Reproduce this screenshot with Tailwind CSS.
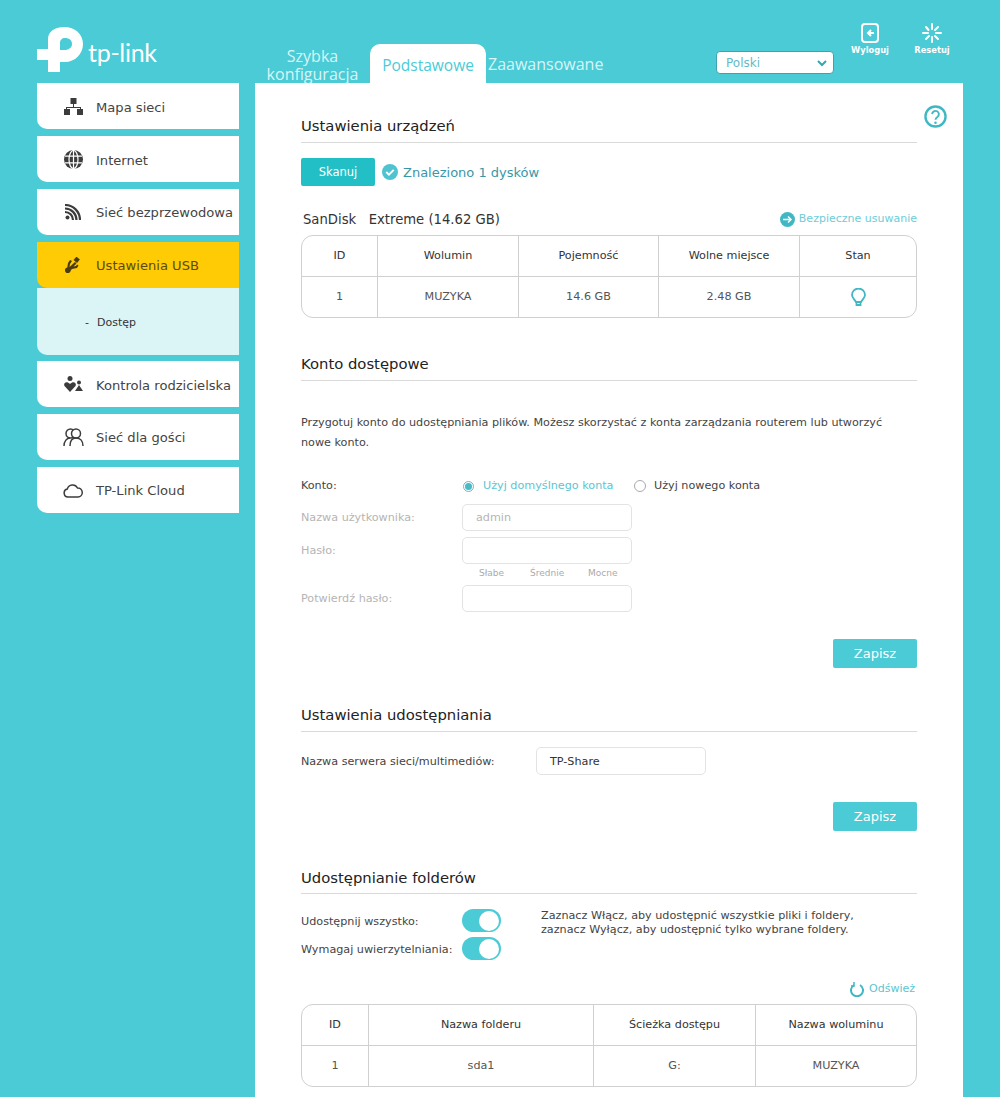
<!DOCTYPE html>
<html lang="pl">
<head>
<meta charset="utf-8">
<script src="https://cdn.jsdelivr.net/npm/@tailwindcss/browser@4"></script>
</head>
<body class="m-0">
<div class="w-[1000px] h-[1097px] overflow-hidden bg-[#4acbd6] font-['DejaVu_Sans',sans-serif] text-[#333]">
  <!-- header -->
  <header class="h-[83px] flex items-end relative">
    <div class="w-[255px] h-full pl-[37px] pt-[27px] flex items-start shrink-0">
      <svg width="46" height="46" viewBox="0 0 46 46" class="shrink-0"><path fill="#fff" d="M0 22h11V12C11 5 17 0 27 0c11 0 19 7 19 17S38 35 28 35h-5V23h4c4 0 8-2 8-6s-3-6-7-6c-3 0-5 2-5 5v29H11V33H0z"/></svg>
      <span class="ml-[5px] mt-[11px] text-[25px] leading-[28px] font-['Lato',sans-serif] text-white tracking-[-0.3px]">tp-link</span>
    </div>
    <nav class="flex items-end h-full font-['Open_Sans',sans-serif] text-[16px] leading-[18px]">
      <a class="w-[115px] text-center text-[#d9f5f7]">Szybka<br>konfiguracja</a>
      <a class="w-[116px] h-[39px] pt-[2px] bg-white rounded-t-[10px] flex items-center justify-center text-[15.5px] text-[#4acbd6]">Podstawowe</a>
      <a class="pl-[2px] pb-[10px] text-[#d9f5f7]">Zaawansowane</a>
    </nav>
    <div class="absolute left-[716px] top-[51px] w-[118px] h-[23px] pt-[1px] bg-white rounded-[4px] border border-[#3aa5ae] flex items-center justify-between pl-[9px] pr-[5px] text-[12px] text-[#62bcc6]">
      Polski
      <svg width="12" height="12" viewBox="0 0 12 12"><path d="M2 4l4 4 4-4" fill="none" stroke="#3aa5ae" stroke-width="2"/></svg>
    </div>
    <div class="absolute left-[845px] top-[23px] w-[50px] flex flex-col items-center text-white text-[8.3px] font-bold leading-[11px]">
      <svg width="18" height="20" viewBox="0 0 18 20"><rect x="1" y="1" width="16" height="18" rx="3" fill="none" stroke="#fff" stroke-width="2"/><path d="M13 10H7m3-3l-3 3 3 3" fill="none" stroke="#fff" stroke-width="2"/></svg>
      <span class="mt-[2px]">Wyloguj</span>
    </div>
    <div class="absolute left-[907px] top-[23px] w-[50px] flex flex-col items-center text-white text-[8.3px] font-bold leading-[11px]">
      <svg width="20" height="20" viewBox="0 0 20 20" stroke="#fff" stroke-width="2" stroke-linecap="round"><path d="M10 1v5M10 14v5M1 10h5M14 10h5M4 4l2.500 3M16 4l-3 3M4 16l3-3M16 16l-3-3"/></svg>
      <span class="mt-[2px]">Resetuj</span>
    </div>
  </header>

  <div class="flex items-start">
    <!-- sidebar -->
    <aside class="w-[202px] ml-[37px] mr-[16px] flex flex-col text-[13.1px] text-[#444] shrink-0">
      <a class="h-[46px] pt-[3px] bg-white rounded-bl-[10px] flex items-center mb-[7px]">
        <span class="w-[59px] pl-[13px] mb-[3px] flex justify-center"><svg width="19" height="17" viewBox="0 0 19 17" fill="#3c3c3c"><rect x="6.500" y="0" width="6" height="6"/><rect x="0" y="11" width="6" height="6"/><rect x="13" y="11" width="6" height="6"/><path d="M9 6h1v3h7v3h-1v-2H3v2H2V9h7z"/></svg></span>Mapa sieci
      </a>
      <a class="h-[46px] pt-[3px] bg-white rounded-bl-[10px] flex items-center mb-[7px]">
        <span class="w-[59px] pl-[13px] mb-[3px] flex justify-center"><svg width="19" height="19" viewBox="0 0 19 19"><circle cx="9.500" cy="9.500" r="9.500" fill="#3c3c3c"/><g fill="none" stroke="#fff" stroke-width="1.200"><ellipse cx="9.500" cy="9.500" rx="4.500" ry="9"/><path d="M9.500 0v19M1 6.200h17M1 12.800h17"/></g></svg></span>Internet
      </a>
      <a class="h-[46px] pt-[2px] bg-white rounded-bl-[10px] flex items-center mb-[7px]">
        <span class="w-[59px] pl-[13px] mb-[2px] flex justify-center"><svg width="16" height="16" viewBox="0 0 16 16" fill="none" stroke="#3c3c3c" stroke-width="2.200"><circle cx="2.500" cy="13.500" r="2" fill="#3c3c3c" stroke="none"/><path d="M0 8a8 8 0 0 1 8 8M0 4.500a11.500 11.500 0 0 1 11.500 11.500M0 1a15 15 0 0 1 15 15"/></svg></span><span class="whitespace-nowrap">Sieć bezprzewodowa</span>
      </a>
      <a class="h-[46px] pt-[2px] bg-[#ffcb05] rounded-bl-[10px] flex items-center text-[#5c4a10]">
        <span class="w-[59px] pl-[13px] mb-[2px] flex justify-center"><svg width="16" height="16" viewBox="0 0 16 16" fill="#4a3c10"><circle cx="2.800" cy="13.200" r="2.800"/><path d="M2 12L3 6l2-3 2 1-2 3-.5 3L10 5l1.500 1.500-3 3 2.500-.5 1-1.500 1.500 1-1.500 2.500-5 1-3 3z"/><rect x="9.500" y="0.500" width="4.500" height="4.500" transform="rotate(40 11.700 2.700)"/></svg></span>Ustawienia USB
      </a>
      <div class="h-[67px] pt-[3px] bg-[#dbf5f7] rounded-bl-[10px] flex items-center mb-[6px] pl-[48px] text-[11px] text-[#333]">
        <span class="w-[12px]">-</span>Dostęp
      </div>
      <a class="h-[46px] pt-[3px] bg-white rounded-bl-[10px] flex items-center mb-[7px]">
        <span class="w-[59px] pl-[13px] mb-[3px] flex justify-center"><svg width="19" height="16" viewBox="0 0 19 16" fill="#3c3c3c"><circle cx="6" cy="2.500" r="2.500"/><path d="M6 16L.5 10C-1 7 2.500 4.500 6 8c3.500-3.500 7-1 5.500 2z"/><circle cx="15" cy="6.500" r="2"/><path d="M15 9l4 6h-8z"/></svg></span><span class="whitespace-nowrap">Kontrola rodzicielska</span>
      </a>
      <a class="h-[46px] pt-[2px] bg-white rounded-bl-[10px] flex items-center mb-[7px]">
        <span class="w-[59px] pl-[13px] mb-[2px] flex justify-center"><svg width="21" height="19" viewBox="0 0 21 19" fill="none" stroke="#3c3c3c" stroke-width="1.500"><circle cx="7.500" cy="5.500" r="4.500"/><circle cx="13" cy="5.500" r="4.500" fill="#fff"/><path d="M1 18c0-5 3-8 6-8M20 18c0-5-3-8-7-8s-6 3-6 8"/></svg></span>Sieć dla gości
      </a>
      <a class="h-[46px] pt-[2px] bg-white rounded-bl-[10px] flex items-center">
        <span class="w-[59px] pl-[13px] mb-[2px] flex justify-center"><svg width="20" height="15" viewBox="0 0 20 15" fill="none" stroke="#3c3c3c" stroke-width="1.500"><path d="M5 14a4 4 0 0 1-.7-7.900A5.500 5.500 0 0 1 14.500 5 4.500 4.500 0 0 1 15 14z"/></svg></span>TP-Link Cloud
      </a>
    </aside>

    <!-- main -->
    <main class="w-[708px] h-[1014px] bg-white relative pl-[46px] pr-[46px] pt-[30px] text-[11.2px]">
      <svg class="absolute left-[669px] top-[22px]" width="23" height="23" viewBox="0 0 24 24" fill="none" stroke="#3fb8c4" stroke-width="2.500"><circle cx="12" cy="12" r="10.500"/><path d="M8.500 9.500a3.500 3.500 0 1 1 5.500 3c-1.500 1-2 1.500-2 3" stroke-width="2"/><circle cx="12" cy="18.500" r="1.300" fill="#3fb8c4" stroke="none"/></svg>

      <h2 class="h-[30px] border-b border-[#d9d9d9] text-[14.8px] leading-[26px] text-[#222] font-normal">Ustawienia urządzeń</h2>
      <div class="mt-[15px] flex items-center h-[28px]">
        <button class="w-[74px] h-[28px] pt-[2px] bg-[#22bfc6] rounded-[2px] text-white text-[11.5px]">Skanuj</button>
        <svg class="ml-[7px]" width="16" height="16" viewBox="0 0 15 15"><circle cx="7.500" cy="7.500" r="7.500" fill="#4fc3d0"/><path d="M4 7.500l2.500 2.500 4.500-4.500" fill="none" stroke="#fff" stroke-width="1.800"/></svg>
        <span class="ml-[5px] pt-[1px] text-[13px] text-[#3a97a8]">Znaleziono 1 dysków</span>
      </div>
      <div class="mt-[22px] h-[28px] flex items-start justify-between">
        <span class="pl-[2px] text-[13.2px] leading-[24px] text-[#333] whitespace-pre">SanDisk   Extreme (14.62 GB)</span>
        <span class="mt-[1px] flex items-center text-[11px] leading-[20px] text-[#6ccdd8]"><svg class="mr-[4px]" width="15" height="15" viewBox="0 0 15 15"><circle cx="7.500" cy="7.500" r="7.500" fill="#3fb8c4"/><path d="M3 7.500h8M8 4.500l3 3-3 3" fill="none" stroke="#fff" stroke-width="1.500"/></svg>Bezpieczne usuwanie</span>
      </div>
      <div class="-mt-[1px] h-[83px] border border-[#d0d0d0] rounded-[12px] grid grid-cols-[76px_141px_140px_141px_1fr] grid-rows-[41px_1fr] text-center items-stretch">
        <div class="flex items-center justify-center border-r border-b border-[#d0d0d0] text-[#333]">ID</div>
        <div class="flex items-center justify-center border-r border-b border-[#d0d0d0] text-[#333]">Wolumin</div>
        <div class="flex items-center justify-center border-r border-b border-[#d0d0d0] text-[#333]">Pojemność</div>
        <div class="flex items-center justify-center border-r border-b border-[#d0d0d0] text-[#333]">Wolne miejsce</div>
        <div class="flex items-center justify-center border-b border-[#d0d0d0] text-[#333]">Stan</div>
        <div class="flex items-center justify-center border-r border-[#d0d0d0] text-[#555]">1</div>
        <div class="flex items-center justify-center border-r border-[#d0d0d0] text-[#555]">MUZYKA</div>
        <div class="flex items-center justify-center border-r border-[#d0d0d0] text-[#555]">14.6 GB</div>
        <div class="flex items-center justify-center border-r border-[#d0d0d0] text-[#555]">2.48 GB</div>
        <div class="flex items-center justify-center"><svg width="15" height="19" viewBox="0 0 15 19" fill="none" stroke="#3fb8c4" stroke-width="1.800"><path d="M5 14C3 11 1 9.500 1 7a6.500 6.500 0 0 1 13 0c0 2.500-2 4-4 7z"/><path d="M5.500 14v3h4v-3"/></svg></div>
      </div>

      <h2 class="mt-[33px] h-[30px] border-b border-[#d9d9d9] text-[14.8px] leading-[26px] text-[#222] font-normal">Konto dostępowe</h2>
      <p class="mt-[32px] leading-[20px] text-[#444]">Przygotuj konto do udostępniania plików. Możesz skorzystać z konta zarządzania routerem lub utworzyć<br>nowe konto.</p>

      <div class="mt-[23px] h-[20px] flex items-center">
        <span class="w-[162px] text-[#444]">Konto:</span>
        <span class="w-[11px] h-[11px] rounded-full border border-[#4fc3d0] flex items-center justify-center"><span class="w-[7px] h-[7px] rounded-full bg-[#4fb8c6]"></span></span>
        <span class="ml-[9px] w-[151px] text-[#5cc5d2] whitespace-nowrap">Użyj domyślnego konta</span>
        <span class="w-[12px] h-[12px] rounded-full border border-[#aaa]"></span>
        <span class="ml-[8px] text-[#444]">Użyj nowego konta</span>
      </div>
      <div class="mt-[8px] flex items-center h-[27px]">
        <span class="w-[161px] pt-[2px] text-[#b5b5b5] whitespace-nowrap">Nazwa użytkownika:</span>
        <div class="w-[170px] h-[27px] pt-[2px] border border-[#e3e3e3] rounded-[5px] pl-[13px] flex items-center text-[#b5b5b5]">admin</div>
      </div>
      <div class="mt-[6px] flex items-center h-[27px]">
        <span class="w-[161px] pt-[2px] text-[#b5b5b5]">Hasło:</span>
        <div class="w-[170px] h-[27px] border border-[#e3e3e3] rounded-[5px]"></div>
      </div>
      <div class="mt-[2px] h-[15px] pl-[178px] flex items-center text-[9px] text-[#aaa]">
        <span class="w-[51px]">Słabe</span><span class="w-[58px]">Średnie</span><span>Mocne</span>
      </div>
      <div class="mt-[4px] flex items-center h-[27px]">
        <span class="w-[161px] pt-[2px] text-[#b5b5b5]">Potwierdź hasło:</span>
        <div class="w-[170px] h-[27px] border border-[#e3e3e3] rounded-[5px]"></div>
      </div>
      <div class="mt-[27px] flex justify-end">
        <button class="w-[84px] h-[29px] pt-[1px] bg-[#4acbd6] rounded-[2px] text-white text-[13px]">Zapisz</button>
      </div>

      <h2 class="mt-[34px] h-[30px] border-b border-[#d9d9d9] text-[14.8px] leading-[26px] text-[#222] font-normal">Ustawienia udostępniania</h2>
      <div class="mt-[15px] flex items-center h-[28px]">
        <span class="w-[235px] pt-[2px] text-[#444]">Nazwa serwera sieci/multimediów:</span>
        <div class="w-[170px] h-[28px] pt-[2px] border border-[#e3e3e3] rounded-[5px] pl-[13px] flex items-center text-[#333]">TP-Share</div>
      </div>
      <div class="mt-[27px] flex justify-end">
        <button class="w-[84px] h-[29px] pt-[1px] bg-[#4acbd6] rounded-[2px] text-white text-[13px]">Zapisz</button>
      </div>

      <h2 class="mt-[33px] h-[30px] border-b border-[#d9d9d9] text-[14.8px] leading-[27px] text-[#222] font-normal">Udostępnianie folderów</h2>
      <div class="mt-[15px] flex">
        <div class="w-[240px] flex flex-col gap-[5px]">
          <div class="flex items-center h-[23px]">
            <span class="w-[161px] pt-[3px] text-[#444] whitespace-nowrap">Udostępnij wszystko:</span>
            <span class="w-[39px] h-[23px] rounded-full bg-[#4acbd6] flex items-center justify-end pr-[2px]"><span class="w-[20px] h-[20px] rounded-full bg-white"></span></span>
          </div>
          <div class="flex items-center h-[23px]">
            <span class="w-[161px] pt-[3px] text-[#444] whitespace-nowrap">Wymagaj uwierzytelniania:</span>
            <span class="w-[39px] h-[23px] rounded-full bg-[#4acbd6] flex items-center justify-end pr-[2px]"><span class="w-[20px] h-[20px] rounded-full bg-white"></span></span>
          </div>
        </div>
        <p class="leading-[14px] text-[#444] whitespace-nowrap">Zaznacz Włącz, aby udostępnić wszystkie pliki i foldery,<br>zaznacz Wyłącz, aby udostępnić tylko wybrane foldery.</p>
      </div>
      <div class="mt-[20px] h-[18px] flex items-center justify-end pr-[2px] text-[11px] text-[#5cc5d2]">
        <svg class="mr-[5px]" width="14" height="15" viewBox="0 0 14 15" fill="none" stroke="#3fb8c4" stroke-width="2"><path d="M4 3a6 6 0 1 0 6 0"/><path d="M4 0v4H1" stroke-width="1.500"/></svg>Odśwież
      </div>
      <div class="mt-[6px] h-[83px] border border-[#d0d0d0] rounded-[12px] grid grid-cols-[67px_225px_162px_1fr] grid-rows-[41px_1fr] text-center">
        <div class="flex items-center justify-center border-r border-b border-[#d0d0d0] text-[#333]">ID</div>
        <div class="flex items-center justify-center border-r border-b border-[#d0d0d0] text-[#333]">Nazwa folderu</div>
        <div class="flex items-center justify-center border-r border-b border-[#d0d0d0] text-[#333]">Ścieżka dostępu</div>
        <div class="flex items-center justify-center border-b border-[#d0d0d0] text-[#333]">Nazwa woluminu</div>
        <div class="flex items-center justify-center border-r border-[#d0d0d0] text-[#555]">1</div>
        <div class="flex items-center justify-center border-r border-[#d0d0d0] text-[#555]">sda1</div>
        <div class="flex items-center justify-center border-r border-[#d0d0d0] text-[#555]">G:</div>
        <div class="flex items-center justify-center text-[#555]">MUZYKA</div>
      </div>
    </main>
  </div>
</div>
</body>
</html>
